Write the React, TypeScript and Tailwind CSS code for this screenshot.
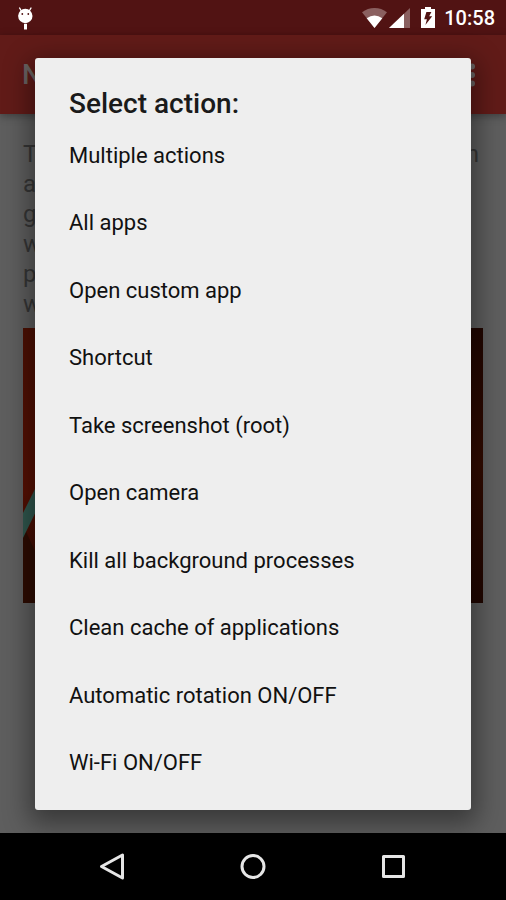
import React from "react";

const actions = [
  "Multiple actions",
  "All apps",
  "Open custom app",
  "Shortcut",
  "Take screenshot (root)",
  "Open camera",
  "Kill all background processes",
  "Clean cache of applications",
  "Automatic rotation ON/OFF",
  "Wi-Fi ON/OFF",
];

const paragraph = ["a", "g", "w", "p", "w"];

function StatusBar() {
  return (
    <div className="flex h-[35px] shrink-0 items-center justify-between bg-[#511313] pr-[11px] pl-[17px] text-white">
      {/* Debug notification */}
      <svg className="h-6 w-4" viewBox="0 0 16 24" fill="currentColor" aria-hidden="true">
        <circle cx="8.3" cy="10" r="7.2" />
        <path d="M4.4 5 2.6 2M12.2 5 14 2" stroke="currentColor" strokeWidth="1.4" strokeLinecap="round" />
        <path d="M7 17.8h3v5.7H7z" />
        <circle cx="5.3" cy="8" r="0.9" fill="#511313" />
        <circle cx="11.3" cy="8" r="0.9" fill="#511313" />
      </svg>
      <div className="flex items-center">
        {/* Wi-Fi */}
        <svg className="h-5 w-[25px]" viewBox="0 0 25 20" fill="currentColor" aria-hidden="true">
          <path d="M12.5 20 0 4.3Q5.5 0 12.5 0T25 4.3z" opacity="0.33" />
          <path d="M12.5 20 4.7 10.2Q8.5 7.6 12.5 7.6t7.8 2.6z" />
        </svg>
        {/* Mobile signal */}
        <svg className="ml-[2px] h-5 w-[21px]" viewBox="0 0 21 20" fill="currentColor" aria-hidden="true">
          <path d="M0 20 21 0v20z" opacity="0.33" />
          <path d="M0 20 15 5.7V20z" />
        </svg>
        {/* Battery */}
        <svg className="ml-[11px] h-[21px] w-[14px]" viewBox="0 0 14 21" aria-hidden="true">
          <path d="M4 0h6v2h4v19H0V2h4z" fill="currentColor" />
          <path d="M5.4 5h5L8.2 9.2h3L4.4 18l1.5-5.8H3.2z" fill="#511313" />
        </svg>
        <span className="ml-[9px] text-[20px] leading-6 font-medium">10:58</span>
      </div>
    </div>
  );
}

function AppBar() {
  return (
    <header className="flex h-[79px] shrink-0 items-center justify-between bg-[#611b18] pr-[31px] pl-[22px] text-[#6b6463] shadow-[0_2px_8px_rgba(0,0,0,0.35)]">
      <h1 className="text-[28px] leading-8 font-medium">N</h1>
      <button type="button" aria-label="More options" className="flex h-8 w-6 items-center justify-end">
        <svg className="h-6 w-[6px]" viewBox="0 0 6 24" fill="currentColor" aria-hidden="true">
          <circle cx="3" cy="3.5" r="3" />
          <circle cx="3" cy="12" r="3" />
          <circle cx="3" cy="20.5" r="3" />
        </svg>
      </button>
    </header>
  );
}

function Preview() {
  return (
    <svg className="h-[275px] w-full" viewBox="0 0 461 275" preserveAspectRatio="none" aria-hidden="true">
      <defs>
        <linearGradient id="left" x1="0" y1="0" x2="0" y2="1">
          <stop offset="0" stopColor="#4d1003" />
          <stop offset="0.6" stopColor="#571003" />
          <stop offset="1" stopColor="#2d0b02" />
        </linearGradient>
        <linearGradient id="right" x1="0" y1="0" x2="0" y2="1">
          <stop offset="0" stopColor="#210600" />
          <stop offset="0.5" stopColor="#320b01" />
          <stop offset="1" stopColor="#200600" />
        </linearGradient>
      </defs>
      <rect width="230" height="275" fill="url(#left)" />
      <rect x="230" width="231" height="275" fill="url(#right)" />
      <path d="M0 197 40 284H0z" fill="#2e0c02" />
      <path d="M0 185 13 159 28 129V153L0 210z" fill="#30574e" />
    </svg>
  );
}

function ActionDialog() {
  return (
    <div
      role="dialog"
      aria-labelledby="dialog-title"
      className="absolute inset-x-[35px] top-[58px] bottom-[90px] flex flex-col rounded-[3px] bg-[#eeeeee] pt-[28px] pb-[13px] shadow-[0_8px_26px_6px_rgba(0,0,0,0.4)]"
    >
      <h2 id="dialog-title" className="px-[34px] text-[28px] leading-[36px] font-medium text-[#1a1a1a]">
        Select action:
      </h2>
      <ul className="grid flex-1 auto-rows-fr">
        {actions.map((action) => (
          <li key={action} className="flex">
            <button type="button" className="w-full px-[34px] text-left text-[22px] leading-7 text-[#111111]">
              {action}
            </button>
          </li>
        ))}
      </ul>
    </div>
  );
}

function NavBar() {
  return (
    <nav className="flex h-[67px] shrink-0 items-center justify-center gap-[110px] bg-black text-[#e6e6e6]">
      <button type="button" aria-label="Back">
        <svg className="h-[30px] w-[30px]" viewBox="0 0 30 30" fill="none" stroke="currentColor" strokeWidth="3" strokeLinejoin="round" aria-hidden="true">
          <path d="M24.5 3v23L3.5 14.5z" />
        </svg>
      </button>
      <button type="button" aria-label="Home">
        <svg className="h-[30px] w-[30px]" viewBox="0 0 30 30" fill="none" stroke="currentColor" strokeWidth="3" aria-hidden="true">
          <circle cx="15" cy="14.5" r="11" />
        </svg>
      </button>
      <button type="button" aria-label="Recent apps">
        <svg className="h-[30px] w-[30px]" viewBox="0 0 30 30" fill="none" stroke="currentColor" strokeWidth="3" strokeLinejoin="round" aria-hidden="true">
          <path d="M5.5 4.5h20v20h-20z" />
        </svg>
      </button>
    </nav>
  );
}

export default function App() {
  return (
    <div className="relative flex min-h-screen flex-col bg-[#5e5e5e] font-['Roboto',sans-serif]">
      <StatusBar />
      <AppBar />
      <main className="flex-1 px-[23px] pt-[25px] text-[24px] leading-[30px] text-[#363636]">
        <p className="flex justify-between pr-[4px]">
          <span>T</span>
          <span>n</span>
        </p>
        {paragraph.map((line, i) => (
          <p key={i}>{line}</p>
        ))}
        <div className="mt-[9px]">
          <Preview />
        </div>
      </main>
      <NavBar />
      <ActionDialog />
    </div>
  );
}
